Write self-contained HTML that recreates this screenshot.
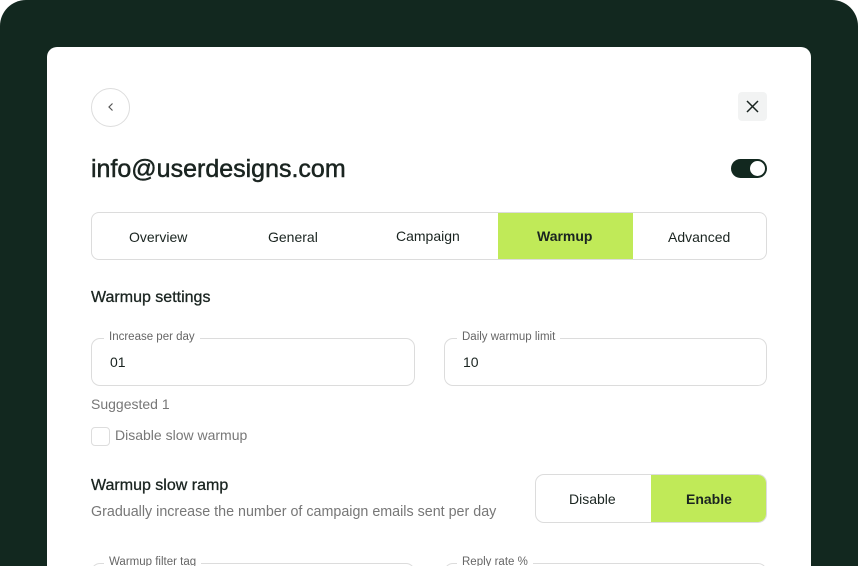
<!DOCTYPE html>
<html style="width:858px;height:566px;overflow:hidden"><head><style>
*{box-sizing:border-box;margin:0;padding:0}
body{width:858px;height:566px;background:#fff;font-family:"Liberation Sans",sans-serif;overflow:hidden;position:relative}
.bg{position:absolute;left:0;top:0;width:858px;height:566px;background:#12281f;border-radius:26px 26px 0 0}
.card{position:absolute;left:47px;top:47px;width:764px;height:519px;background:#fff;border-radius:10px 10px 0 0;overflow:hidden}
.abs{position:absolute}
.t{color:#1a2420}
.field{position:absolute;height:48px;border:1px solid #dcdcdc;border-radius:9px}
.field .lb{position:absolute;top:-8px;left:12px;background:#fff;padding:0 5px;font-size:11.5px;color:#666}
.field .v{position:absolute;left:18px;top:15px;font-size:14px;color:#1a2420}
.m{-webkit-text-stroke:0.3px #1a2420}
</style></head><body>
<div class="bg"></div>
<div class="card">
 <div class="abs" style="left:44px;top:41px;width:39px;height:39px;border:1px solid #ddd;border-radius:50%"></div>
 <svg class="abs" style="left:58px;top:54px" width="12" height="12" viewBox="0 0 12 12"><path d="M7.5 2.5L4 6l3.5 3.5" fill="none" stroke="#555" stroke-width="1.2"/></svg>
 <div class="abs" style="left:691px;top:45px;width:29px;height:29px;background:#f2f3f3;border-radius:4px"></div>
 <svg class="abs" style="left:698px;top:52px" width="15" height="15" viewBox="0 0 15 15"><path d="M2 2l11 11M13 2L2 13" stroke="#1a2420" stroke-width="1.5"/></svg>
 <div class="abs t m" style="left:44px;top:108px;font-size:25px;-webkit-text-stroke:0.5px #1a2420">info@userdesigns.com</div>
 <div class="abs" style="left:684px;top:112px;width:36px;height:19px;background:#12281f;border-radius:10px"></div>
 <div class="abs" style="left:703px;top:114px;width:15px;height:15px;background:#fff;border-radius:50%"></div>
 <div class="abs" style="left:44px;top:165px;width:676px;height:48px;border:1px solid #dcdcdc;border-radius:8px;overflow:hidden">
  <div class="abs" style="left:406px;top:0;width:135px;height:48px;background:#c0ea58"></div>
  <div class="abs t" style="left:37px;top:16px;font-size:14px">Overview</div>
  <div class="abs t" style="left:176px;top:16px;font-size:14px">General</div>
  <div class="abs t" style="left:304px;top:15px;font-size:14px">Campaign</div>
  <div class="abs t" style="left:445px;top:15px;font-size:14px;font-weight:bold">Warmup</div>
  <div class="abs t" style="left:576px;top:16px;font-size:14px">Advanced</div>
 </div>
 <div class="abs t m" style="left:44px;top:242px;font-size:16px">Warmup settings</div>
 <div class="field" style="left:44px;top:291px;width:324px"><span class="lb">Increase per day</span><span class="v">01</span></div>
 <div class="field" style="left:397px;top:291px;width:323px"><span class="lb">Daily warmup limit</span><span class="v">10</span></div>
 <div class="abs" style="left:44px;top:349px;font-size:14px;color:#777">Suggested 1</div>
 <div class="abs" style="left:44px;top:380px;width:19px;height:19px;border:1px solid #ddd;border-radius:4px"></div>
 <div class="abs" style="left:68px;top:380px;font-size:14px;color:#777">Disable slow warmup</div>
 <div class="abs t m" style="left:44px;top:430px;font-size:16px">Warmup slow ramp</div>
 <div class="abs" style="left:44px;top:457px;font-size:14.3px;color:#777">Gradually increase the number of campaign emails sent per day</div>
 <div class="abs" style="left:488px;top:427px;width:232px;height:49px;border:1px solid #dcdcdc;border-radius:9px;overflow:hidden">
  <div class="abs" style="left:115px;top:0;width:117px;height:49px;background:#c0ea58"></div>
  <div class="abs t" style="left:33px;top:16px;font-size:14px">Disable</div>
  <div class="abs t" style="left:150px;top:16px;font-size:14px;font-weight:bold">Enable</div>
 </div>
 <div class="field" style="left:44px;top:516px;width:324px"><span class="lb">Warmup filter tag</span></div>
 <div class="field" style="left:397px;top:516px;width:323px"><span class="lb">Reply rate %</span></div>
</div>
</body></html>
